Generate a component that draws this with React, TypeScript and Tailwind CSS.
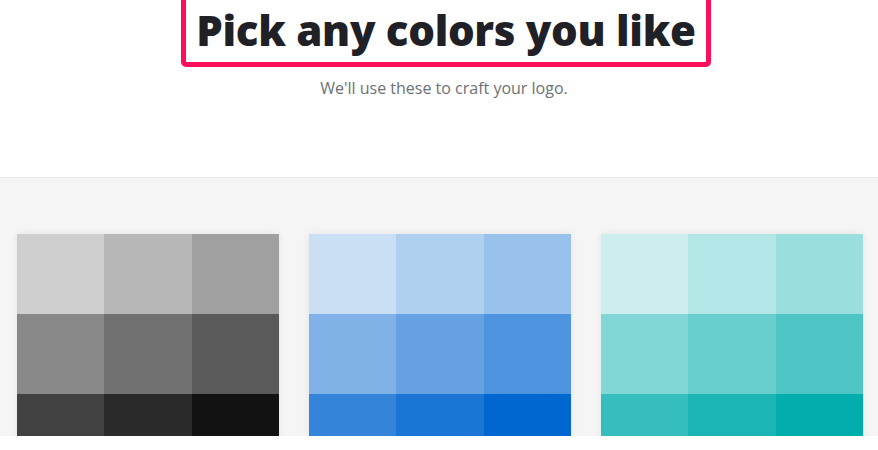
import React from "react";

const palettes: string[][] = [
  ["#cfcfcf", "#b7b7b7", "#a0a0a0", "#898989", "#717171", "#5a5a5a", "#414141", "#2a2a2a", "#121212"],
  ["#cbdff4", "#b0d0f0", "#98c2ec", "#80b1e7", "#66a2e2", "#4d93de", "#3484d9", "#1a75d5", "#0066d0"],
  ["#cdeeef", "#b3e6e7", "#9adede", "#82d7d6", "#68cfce", "#4fc5c5", "#36bdbd", "#1cb5b5", "#02adad"],
];

export default function App() {
  return (
    <div className="w-[878px] h-[450px] bg-white overflow-hidden">
      <div className="h-[177px] flex flex-col items-center">
        <div className="mt-[-10px] ml-[14px] h-[77px] w-[530px] border-[5px] border-[#fd0f5b] rounded-[5px] flex items-center justify-center pt-[2px]">
          <h1
            className="text-[42px] leading-none font-extrabold text-[#1f2126] tracking-[-0.3px]"
            style={{ fontFamily: "'Open Sans', sans-serif" }}
          >
            Pick any colors you like
          </h1>
        </div>
        <p
          className="mt-[9px] ml-[10px] text-[16px] text-[#6d7178]"
          style={{ fontFamily: "'Open Sans', sans-serif" }}
        >
          We'll use these to craft your logo.
        </p>
      </div>
      <div className="h-[259px] border-t border-[#e9e9e9] bg-[#f5f5f5] overflow-hidden">
        <div className="flex gap-[30px] pl-[17px] pt-[56px]">
          {palettes.map((p, i) => (
            <div key={i} className="w-[262px] grid grid-cols-[87px_88px_87px] shadow-[0_0_8px_rgba(0,0,0,0.07)]">
              {p.map((c, j) => (
                <div key={j} className="h-[80px]" style={{ backgroundColor: c }} />
              ))}
            </div>
          ))}
        </div>
      </div>
    </div>
  );
}
